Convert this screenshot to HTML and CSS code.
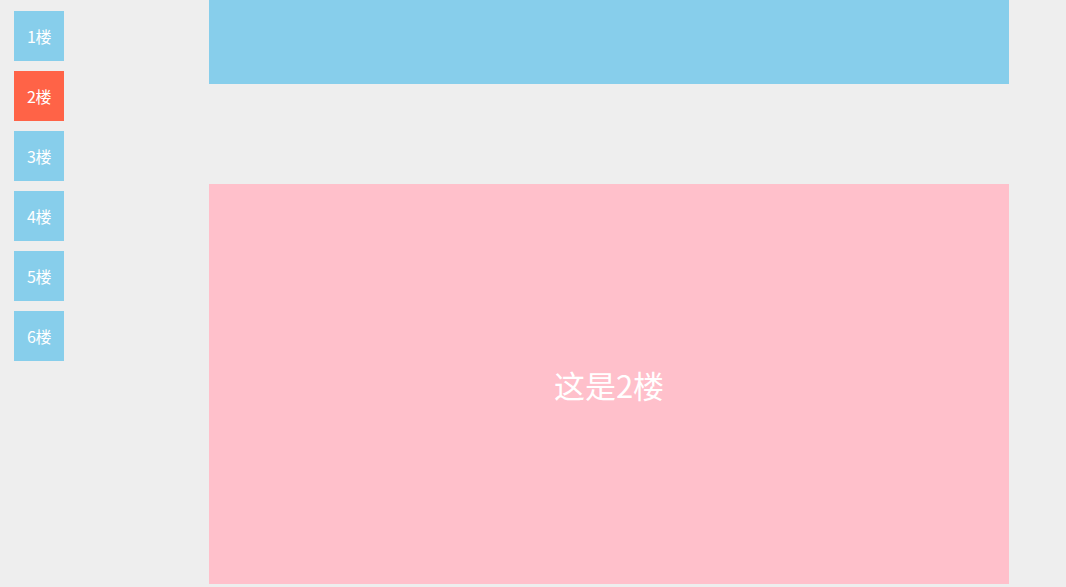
FILE: index.html
```html
<!DOCTYPE html>
<html lang="zh">
<head>
<meta charset="utf-8">
<title>楼层导航</title>
<link rel="stylesheet" href="styles.css">
</head>
<body>
<ul class="nav">
  <li class="nav-item">1楼</li>
  <li class="nav-item active">2楼</li>
  <li class="nav-item">3楼</li>
  <li class="nav-item">4楼</li>
  <li class="nav-item">5楼</li>
  <li class="nav-item">6楼</li>
</ul>
<main class="floors">
  <section class="floor floor-1 partial"></section>
  <section class="floor floor-2">这是2楼</section>
</main>
</body>
</html>
```
FILE: styles.css
```css
html, body {
  margin: 0;
  padding: 0;
  background: #eeeeee;
  overflow: hidden;
  height: 587px;
}
body {
  font-family: "Noto Sans CJK SC", "Microsoft YaHei", sans-serif;
  display: flex;
}
.nav {
  list-style: none;
  margin: 0;
  padding: 11px 0 0 14px;
  display: flex;
  flex-direction: column;
  gap: 10px;
  width: 209px;
  flex: none;
  box-sizing: border-box;
}
.nav-item {
  width: 50px;
  height: 50px;
  background: #87ceeb;
  color: #fff;
  font-size: 16px;
  display: flex;
  align-items: center;
  justify-content: center;
  letter-spacing: -0.5px;
}
.nav-item.active {
  background: #ff6347;
}
.floors {
  display: flex;
  flex-direction: column;
  gap: 100px;
  width: 800px;
  flex: none;
}
.floor {
  height: 400px;
  display: flex;
  align-items: center;
  justify-content: center;
  color: #fff;
  font-size: 31px;
}
.floor.partial {
  height: 84px;
}
.floor-1 { background: #87ceeb; }
.floor-2 { background: #ffc0cb; }
```
